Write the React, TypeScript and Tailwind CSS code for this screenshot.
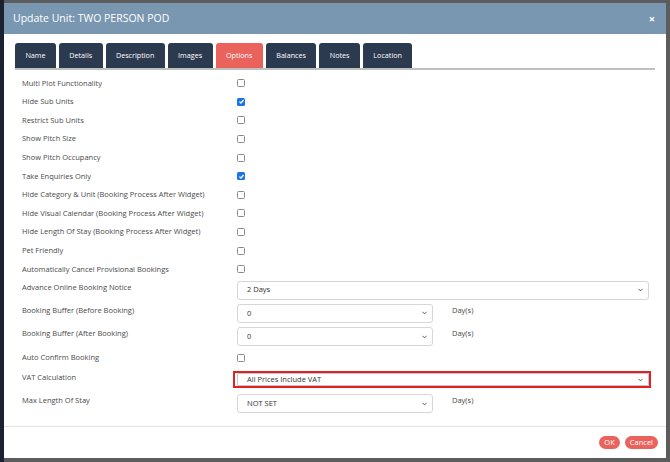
import React from 'react';
import { ChevronDown } from 'lucide-react';

const tabs = ['Name', 'Details', 'Description', 'Images', 'Options', 'Balances', 'Notes', 'Location'];

type Row =
  | { kind: 'check'; label: string; checked?: boolean }
  | { kind: 'select'; label: string; value: string; wide?: boolean; days?: boolean; highlight?: boolean };

const rows: Row[] = [
  { kind: 'check', label: 'Multi Plot Functionality' },
  { kind: 'check', label: 'Hide Sub Units', checked: true },
  { kind: 'check', label: 'Restrict Sub Units' },
  { kind: 'check', label: 'Show Pitch Size' },
  { kind: 'check', label: 'Show Pitch Occupancy' },
  { kind: 'check', label: 'Take Enquiries Only', checked: true },
  { kind: 'check', label: 'Hide Category & Unit (Booking Process After Widget)' },
  { kind: 'check', label: 'Hide Visual Calendar (Booking Process After Widget)' },
  { kind: 'check', label: 'Hide Length Of Stay (Booking Process After Widget)' },
  { kind: 'check', label: 'Pet Friendly' },
  { kind: 'check', label: 'Automatically Cancel Provisional Bookings' },
  { kind: 'select', label: 'Advance Online Booking Notice', value: '2 Days', wide: true },
  { kind: 'select', label: 'Booking Buffer (Before Booking)', value: '0', days: true },
  { kind: 'select', label: 'Booking Buffer (After Booking)', value: '0', days: true },
  { kind: 'check', label: 'Auto Confirm Booking' },
  { kind: 'select', label: 'VAT Calculation', value: 'All Prices Include VAT', wide: true, highlight: true },
  { kind: 'select', label: 'Max Length Of Stay', value: 'NOT SET', days: true },
];

const Checkbox: React.FC<{ checked?: boolean }> = ({ checked }) =>
  checked ? (
    <span className="w-[8px] h-[8px] rounded-[1.5px] bg-[#1a73e8] flex items-center justify-center">
      <svg viewBox="0 0 10 10" className="w-[7px] h-[7px]">
        <path d="M2 5.2 L4.1 7.2 L8 2.8" fill="none" stroke="white" strokeWidth="1.8" />
      </svg>
    </span>
  ) : (
    <span className="w-[8px] h-[8px] rounded-[1.5px] border border-[#8a8a8a] bg-white block" />
  );

const SelectBox: React.FC<{ value: string; wide?: boolean; highlight?: boolean }> = ({ value, wide, highlight }) => (
  <div
    className={`relative flex items-center bg-white border ${
      highlight ? 'h-[13px] border-[#b9c6dd] rounded-[1px]' : 'h-[19px] border-[#d6d6d6] rounded-[3px]'
    } ${wide ? 'w-[412px]' : 'w-[196px]'} pl-[9px] text-[7.5px] text-[#333]`}
  >
    <span>{value}</span>
    <ChevronDown className="absolute right-[4px] top-1/2 -translate-y-1/2 w-[7px] h-[7px] text-[#444]" strokeWidth={3} />
  </div>
);

export default function App() {
  return (
    <div className="w-[670px] h-[462px] bg-[#5c5c5c] pt-[3px] pr-[4px] pb-[4px] border-l-4 border-[#1b2130] font-['Open_Sans',sans-serif]">
      <div className="w-full h-full bg-white flex flex-col overflow-hidden">
        <div className="h-[31px] bg-[#7a97b1] flex items-center justify-between pl-[9px] pr-[11px]">
          <span className="text-white text-[10.5px]">Update Unit: TWO PERSON POD</span>
          <span className="text-white text-[11px] font-bold leading-none">×</span>
        </div>

        <div className="px-[11px] pt-[9px]">
          <div className="flex gap-[3px] border-b-2 border-[#bfbfbf]">
            {tabs.map((t) => (
              <div
                key={t}
                className={`h-[25px] px-[10.4px] rounded-t-[3px] flex items-center text-[7.2px] text-white ${
                  t === 'Options' ? 'bg-[#e9625c]' : 'bg-[#2c3a50]'
                }`}
              >
                {t}
              </div>
            ))}
          </div>
        </div>

        <div className="flex-1 pl-[18px] pt-[4px] text-[7.5px] text-[#4a4a4a]">
          {rows.map((r) =>
            r.kind === 'check' ? (
              <div key={r.label} className="h-[18.6px] flex items-center">
                <span className="w-[215px]">{r.label}</span>
                <Checkbox checked={r.checked} />
              </div>
            ) : (
              <div
                key={r.label}
                className={`flex items-start ${r.highlight ? 'h-[25.3px] pt-[4px]' : 'h-[23.3px] pt-[2px]'}`}
              >
                <span className="w-[215px] leading-[12px]">{r.label}</span>
                {r.highlight ? (
                  <div className="-ml-[4px] border-2 border-[#e3201b] pl-[2px]">
                    <SelectBox value={r.value} wide highlight />
                  </div>
                ) : (
                  <SelectBox value={r.value} wide={r.wide} />
                )}
                {r.days && <span className="ml-[19px] leading-[12px]">Day(s)</span>}
              </div>
            )
          )}
        </div>

        <div className="border-t border-[#e3e3e3] h-[32px] flex items-center justify-end gap-[5px] pr-[8px]">
          <span className="h-[13px] px-[5px] rounded-full bg-[#e9625c] text-white text-[7.5px] flex items-center">OK</span>
          <span className="h-[13px] px-[5px] rounded-full bg-[#e9625c] text-white text-[7.5px] flex items-center">Cancel</span>
        </div>
      </div>
    </div>
  );
}
